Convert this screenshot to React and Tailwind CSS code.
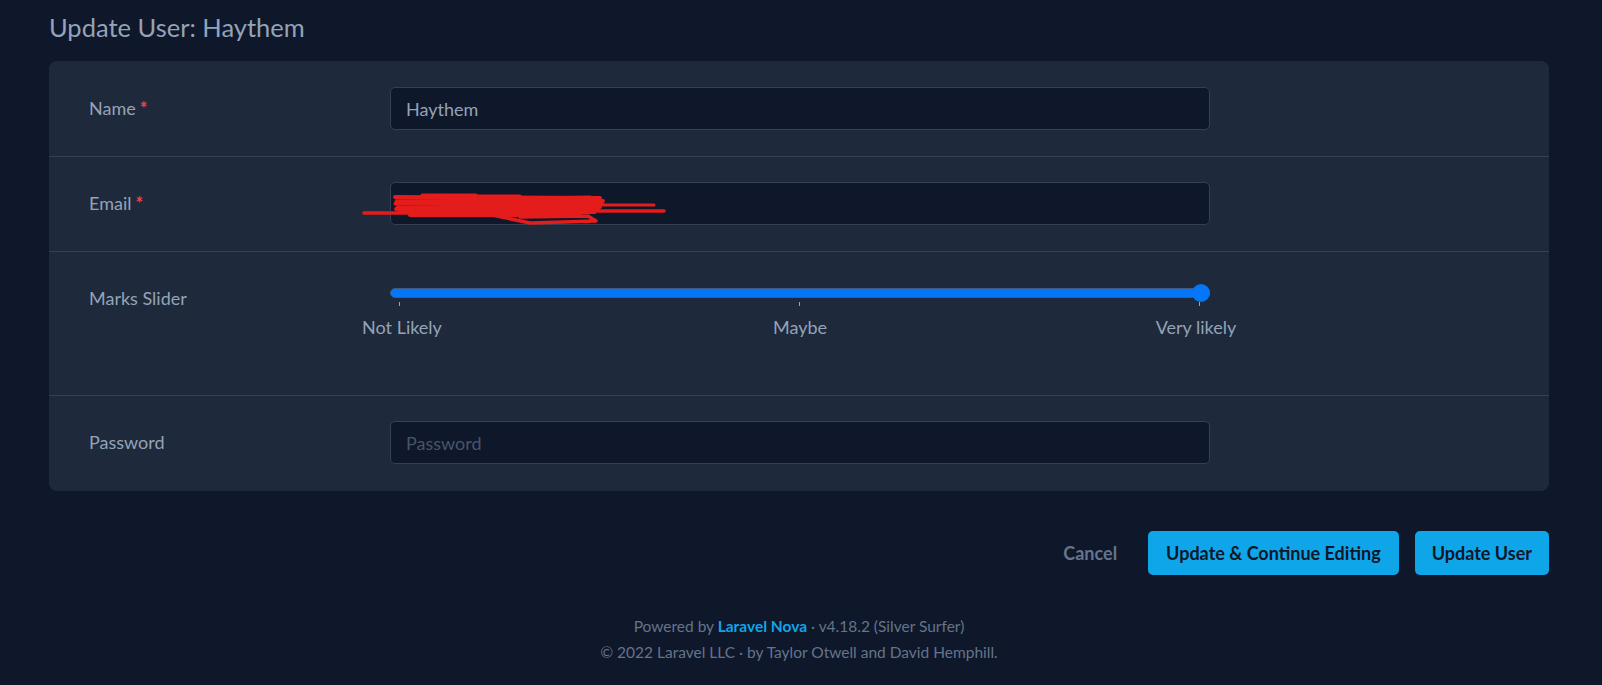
export default function App() {
  const inputCls =
    "w-[820px] h-[43px] rounded-[5px] border border-[#334155] bg-[#0f172a] px-[15px] text-[18px] text-[#94a3b8] outline-none placeholder:text-[#475569]";

  return (
    <div className="min-h-screen bg-[#0f172a] font-['Lato',sans-serif]">
      <div className="pl-[49px] pr-[53px] pt-[11px] pb-10">
        <h1 className="text-[25.5px] leading-8 text-[#94a3b8]">Update User: Haythem</h1>

        <div className="mt-[18px] rounded-lg bg-[#1e293b]">
          {/* Name */}
          <div className="flex border-b border-[#334155] px-[40px] pt-[26px] pb-[26px]">
            <div className="flex h-[43px] w-[301px] items-center text-[18px] text-[#94a3b8]">
              Name <span className="ml-1 font-bold text-[#ef4444]">*</span>
            </div>
            <input className={inputCls} defaultValue="Haythem" />
          </div>

          {/* Email */}
          <div className="relative flex border-b border-[#334155] px-[40px] pt-[25px] pb-[26px]">
            <div className="flex h-[43px] w-[301px] items-center text-[18px] text-[#94a3b8]">
              Email <span className="ml-1 font-bold text-[#ef4444]">*</span>
            </div>
            <input className={inputCls} defaultValue="" />
            {/* redaction scribble */}
            <svg
              className="absolute left-[311px] top-[31px]"
              width="310"
              height="40"
              viewBox="360 186 310 40"
              fill="none"
              stroke="#e51c1c"
              strokeLinecap="round"
              strokeLinejoin="round"
            >
              <path d="M364 211 H465" strokeWidth="3.5" />
              <path d="M395 195 L600 196 M397 198 L603 199 M396 201 L602 202 M398 204 L600 205 M396 207 L598 207 M400 210 L595 210 M410 213 L580 213" strokeWidth="4" />
              <path d="M422 193 H476 M478 194 H520 M396 200 H440" strokeWidth="3" />
              <path d="M600 203 H654" strokeWidth="3" />
              <path d="M598 209 H664" strokeWidth="3.5" />
              <path d="M487 212 L530 221 L596 219 L588 214 L520 215" strokeWidth="3.5" />
              <path d="M540 196 L590 195 M395 202 L430 200" strokeWidth="3" />
            </svg>
          </div>

          {/* Marks Slider */}
          <div className="flex border-b border-[#334155] px-[40px] pt-[25px] pb-[27px]">
            <div className="flex h-[43px] w-[301px] items-center text-[18px] text-[#94a3b8]">
              Marks Slider
            </div>
            <div className="relative h-[91px] w-[820px]">
              <div className="absolute left-0 right-0 top-[11px] h-[10px] rounded-full border border-[#3b5b86] bg-[#0576f7]" />
              <div className="absolute right-0 top-[7px] h-[18px] w-[18px] rounded-full bg-[#0576f7]" />
              <div className="absolute left-[9px] top-[25px] h-[4px] w-px bg-[#94a3b8]" />
              <div className="absolute left-[409px] top-[25px] h-[4px] w-px bg-[#94a3b8]" />
              <div className="absolute left-[809px] top-[25px] h-[4px] w-px bg-[#94a3b8]" />
              <span className="absolute left-[12px] top-[38px] -translate-x-1/2 whitespace-nowrap text-[18px] leading-6 text-[#94a3b8]">
                Not Likely
              </span>
              <span className="absolute left-[410px] top-[38px] -translate-x-1/2 whitespace-nowrap text-[18px] leading-6 text-[#94a3b8]">
                Maybe
              </span>
              <span className="absolute left-[806px] top-[38px] -translate-x-1/2 whitespace-nowrap text-[18px] leading-6 text-[#94a3b8]">
                Very likely
              </span>
            </div>
          </div>

          {/* Password */}
          <div className="flex px-[40px] pt-[25px] pb-[27px]">
            <div className="flex h-[43px] w-[301px] items-center text-[18px] text-[#94a3b8]">
              Password
            </div>
            <input className={inputCls} type="password" placeholder="Password" />
          </div>
        </div>

        <div className="mt-[40px] flex items-center justify-end">
          <button className="mr-[31px] text-[18px] font-bold text-[#64748b]">Cancel</button>
          <button className="h-[44px] rounded-[5px] bg-[#0ea5e9] px-[18px] text-[18px] font-bold text-[#0f172a]">
            Update &amp; Continue Editing
          </button>
          <button className="ml-4 h-[44px] rounded-[5px] bg-[#0ea5e9] px-[17px] text-[18px] font-bold text-[#0f172a]">
            Update User
          </button>
        </div>

        <div className="mt-[38px] text-center text-[15.5px] leading-[26px] text-[#64748b]">
          <p>
            Powered by <span className="font-bold text-[#0ea5e9]">Laravel Nova</span> · v4.18.2 (Silver Surfer)
          </p>
          <p>© 2022 Laravel LLC · by Taylor Otwell and David Hemphill.</p>
        </div>
      </div>
    </div>
  );
}
